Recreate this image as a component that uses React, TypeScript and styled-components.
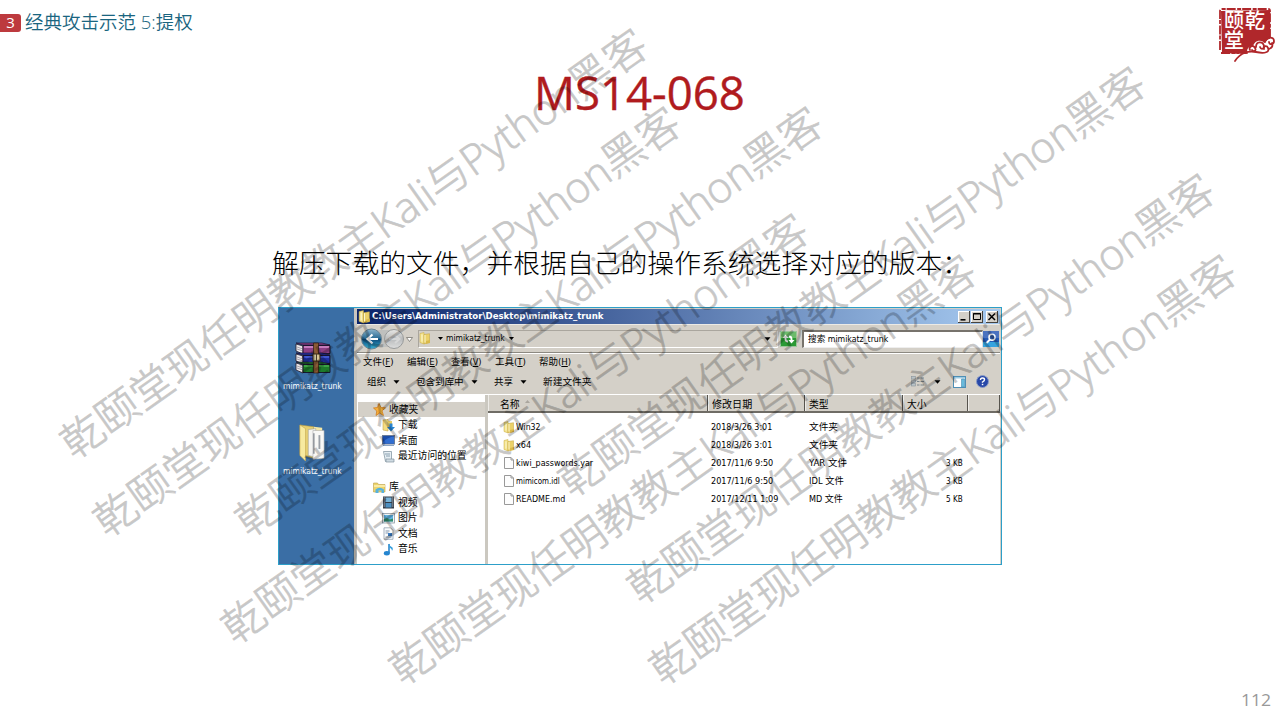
import React, { useLayoutEffect, useRef, useState } from "react";
import styled, { createGlobalStyle } from "styled-components";

const Global = createGlobalStyle`
  * { box-sizing: border-box; }
  body { margin: 0; background: #fff; overflow: hidden; }
`;

const uiFont = `"DejaVu Sans Condensed", "DejaVu Sans", "Noto Sans CJK SC", sans-serif`;

/* ---------- text that is fitted to a column width ---------- */
const FitBox = styled.span<{ $w: number }>`
  display: inline-block;
  width: ${(p) => p.$w}px;
  white-space: nowrap;
  flex: none;
`;
const FitInner = styled.span`
  display: inline-block;
  transform-origin: 0 50%;
`;
function Fit({ w, children }: { w: number; children: React.ReactNode }) {
  const ref = useRef<HTMLSpanElement>(null);
  const [scale, setScale] = useState(1);
  useLayoutEffect(() => {
    const measure = () => {
      if (ref.current) setScale(w / ref.current.offsetWidth);
    };
    measure();
    document.fonts?.ready.then(measure);
  }, [w]);
  return (
    <FitBox $w={w}>
      <FitInner ref={ref} style={{ transform: `scaleX(${scale})` }}>{children}</FitInner>
    </FitBox>
  );
}

/* ---------- slide ---------- */
const Slide = styled.main`
  position: relative;
  width: 1280px;
  height: 720px;
  overflow: hidden;
  background: #fff;
  display: flex;
  flex-direction: column;
`;
const Header = styled.header`
  display: flex;
  justify-content: space-between;
  height: 64px;
  padding-right: 4px;
`;
const Section = styled.div`
  display: flex;
  align-items: center;
  gap: 4px;
  height: 44px;
  font: 350 18.5px/24px "Open Sans", "Noto Sans CJK SC", sans-serif;
  color: #1a6580;
`;
const Badge = styled.span`
  width: 21px;
  height: 18px;
  margin-top: 1px;
  border-radius: 0 3px 3px 0;
  background: #bd3a3e;
  color: #fff;
  font: 400 15px/17px "Open Sans", sans-serif;
  text-align: center;
`;
const Title = styled.h1`
  margin: -2px 0 0 534px;
  height: 62px;
  font: 400 46px/60px "Open Sans", sans-serif;
  color: #b01b1e;
  -webkit-text-stroke: 0.4px #b01b1e;
`;
const Lead = styled.p`
  margin: 120px 0 0 272px;
  height: 38px;
  font: 300 26.67px/36px "Noto Sans CJK SC", sans-serif;
  color: #000;
`;
const PageNo = styled.footer`
  margin: auto 9px 8px auto;
  font: 400 17px/24px "Open Sans", sans-serif;
  color: #999;
`;

/* ---------- desktop and window ---------- */
const Shot = styled.section`
  display: flex;
  width: 724px;
  height: 258px;
  margin: 25px 0 0 278px;
  border: 1px solid #2d9fc9;
  background: #d4d0c8;
  font: 400 9px/12px ${uiFont};
  color: #000;
`;
const Desktop = styled.div`
  width: 75px;
  padding: 34px 0 0 4px;
  background: #3a6ea5;
  display: flex;
  flex-direction: column;
  gap: 29px;
`;
const Shortcut = styled.div`
  display: flex;
  flex-direction: column;
  gap: 3px;
  height: 53px;
  color: #fff;
  svg { margin-left: 12px; }
`;
const Win = styled.div`
  flex: 1;
  display: flex;
  flex-direction: column;
  border: solid #d4d0c8;
  border-width: 1px 1px 0 3px;
  border-left-color: #c9c6bf;
  min-width: 0;
`;
const TitleBar = styled.div`
  display: flex;
  align-items: center;
  height: 15px;
  padding: 0 2px 0 1px;
  background: linear-gradient(90deg, #0a246a, #a6caf0);
  color: #fff;
  font-weight: 700;
  line-height: 11px;
  svg { margin-right: 1px; }
`;
const WinButtons = styled.div`
  display: flex;
  gap: 1px;
  margin-left: auto;
  svg { margin: 0; }
  svg:last-child { margin-left: 2px; }
`;
const AddressRow = styled.div`
  display: flex;
  align-items: center;
  height: 29px;
  padding-left: 4px;
  border-top: 1px solid #eceae5;
  border-bottom: 1px solid #8c8981;
`;
const PathBox = styled.div`
  display: flex;
  align-items: center;
  width: 360px;
  height: 18px;
  margin-left: 1px;
  margin-right: 2px;
  border: 1px solid #aaa69e;
  border-bottom-color: #fff;
  border-right-color: #eee;
  line-height: 11px;
  svg:last-child { margin-left: auto; margin-right: 6px; }
`;
const SearchBox = styled.div`
  display: flex;
  align-items: center;
  width: 181px;
  height: 18px;
  margin-left: 5px;
  padding-left: 4px;
  border: 1px solid #77736c;
  border-width: 2px 1px 1px 2px;
  border-right-color: #ddd;
  border-bottom-color: #eee;
  background: #fff;
`;
const MenuRow = styled.div`
  display: flex;
  align-items: center;
  height: 18px;
  padding: 0 0 2px 6px;
  gap: 13px;
  border-top: 1px solid #fff;
  font-size: 9.5px;
`;
const CommandRow = styled.div`
  display: flex;
  align-items: center;
  height: 23px;
  padding: 0 11px 2px 10px;
  font-size: 9.5px;
`;
const Gap = styled.i<{ $w: number }>`
  width: ${(p) => p.$w}px;
  flex: none;
`;
const Spacer = styled.i`
  flex: 1;
`;
const Body = styled.div`
  flex: 1;
  display: flex;
  background: #fff;
  border-top: 1px solid #fff;
`;
const Nav = styled.nav`
  width: 131px;
  padding-top: 6.5px;
  border-right: 3px solid #cbc8c0;
  font-size: 9.8px;
`;
const NavRow = styled.div<{ $child?: boolean; $on?: boolean }>`
  display: flex;
  align-items: center;
  gap: 3px;
  height: 15.5px;
  margin-left: 1px;
  padding-left: ${(p) => (p.$child ? 24 : 15)}px;
  padding-top: 1px;
  background: ${(p) => (p.$on ? "#d4d0c8" : "transparent")};
`;
const List = styled.div`
  flex: 1;
`;
const HeadRow = styled.div`
  display: flex;
  height: 18px;
  margin-bottom: 5px;
  background: #d4d0c8;
  border-bottom: 2px solid #6f6c65;
  font-size: 9.8px;
  line-height: 19px;
`;
const HeadCell = styled.div<{ $w: number; $pad?: number }>`
  display: flex;
  width: ${(p) => p.$w}px;
  padding-left: ${(p) => p.$pad ?? 3}px;
  border-right: 1px solid #57544e;
  box-shadow: inset 1px 0 #eeece8;
`;
const FileRow = styled.div`
  display: grid;
  grid-template-columns: 13px 195px 98px 97px 57px;
  align-items: center;
  height: 18px;
  margin-left: 15px;
`;
const Size = styled.div`
  display: flex;
  justify-content: flex-end;
`;

/* ---------- watermarks ---------- */
const Mark = styled.div<{ $x: number; $y: number }>`
  position: absolute;
  left: ${(p) => p.$x}px;
  top: ${(p) => p.$y}px;
  height: 56px;
  margin: -28px 0 0 -21px;
  transform: rotate(-35.3deg);
  transform-origin: 21px 28px;
  font: 300 42px/56px "Open Sans", "Noto Sans CJK SC", sans-serif;
  color: #000;
  -webkit-text-stroke: 0.8px #000;
  opacity: 0.215;
  white-space: nowrap;
  pointer-events: none;
`;

/* ---------- logo ---------- */
const Seal = styled.div`
  position: relative;
  width: 58px;
  height: 58px;
  margin-top: 6px;
`;
const SealArt = styled.svg`
  position: absolute;
  inset: 0;
`;
const SealText = styled.div`
  position: relative;
  display: grid;
  grid-template-columns: 21px 22px;
  grid-auto-rows: 20px;
  padding: 4px 0 0 6px;
  font: 500 20px/20px "Noto Sans CJK SC", sans-serif;
  color: #fff;
`;

function SealLogo() {
  return (
    <Seal>
      <SealArt width="58" height="58" viewBox="1218 6 58 58">
        <path d="M1221 11 L1270 10 L1270 39 L1264 43 L1262 53 L1245 54 L1222 53 Z" fill="#b0272b" />
        <path d="M1220 50V11q0-2 2-2h46q2 0 2 2v30M1221 53h18" fill="none" stroke="#b0272b" strokeWidth="1.800" strokeDasharray="9 1.500 4 1" />
        <path d="M1248 54c-3-5 2-9 5-7 1-8 11-8 12-2 0-6 8-9 11-4v16h-20z" fill="#fff" />
        <g fill="none" stroke="#b0272b" strokeWidth="1.800" strokeLinecap="round">
          <path d="M1235 61c6-9 13-10 21-9 9 2 14 0 12-4-1-3-6-2-4 1" />
          <path d="M1250 50c-2-3 3-6 5-2 2 3-2 4-3 2M1256 47c0-6 7-6 8-1 1 3-3 4-4 1M1265 42c1-5 9-6 9-1 0 4-5 4-5 1M1269 49c3-1 4-3 3-6" />
        </g>
      </SealArt>
      <SealText><span>颐</span><span>乾</span><span>堂</span></SealText>
    </Seal>
  );
}

/* ---------- icons ---------- */
function Winrar() {
  return (
    <svg width="36" height="32" viewBox="0 0 36 32">
      {[["#8d3f86", "#d18cc8", 1], ["#2233a8", "#4a61d8", 11], ["#1d7a2a", "#45ad4c", 20]].map(([c, l, y], i) => (
        <g key={i} transform={`translate(0 ${y})`}>
          <path d="M1 1l7 2v8l-7-3z" fill="#ece8ea" stroke="#221c2c" strokeWidth=".8" />
          <path d="M2 4l6 2M2 6l6 2" stroke="#8b8790" strokeWidth=".7" />
          <path d="M1 0h26l8 2H8z" fill={c as string} stroke="#1d1430" strokeWidth=".7" />
          <path d="M8 2.500h27v8H8z" fill={c as string} stroke="#141026" strokeWidth=".9" />
          <path d="M9 4h25" stroke={l as string} strokeWidth="1.600" />
        </g>
      ))}
      <path d="M18.500 1h5v30h-5z" fill="#8a5a35" stroke="#2e1b10" strokeWidth=".7" />
      <path d="M18 12h7v7h-7z" fill="#d8c89a" stroke="#3a2a18" />
      <path d="M21.500 12v8" stroke="#4a3a28" />
    </svg>
  );
}
function BigFolder() {
  return (
    <svg width="34" height="41" viewBox="0 0 34 41">
      <path d="M4 1l15 2v34L4 33z" fill="#e6cf72" stroke="#b99a3d" strokeWidth=".6" />
      <path d="M19 3l9 1v33l-9 1z" fill="#f4e7a4" />
      <path d="M13 6l8-1 1 31-9-2z" fill="#f4f4f2" stroke="#9c9c94" strokeWidth=".6" />
      <path d="M18 7h12v30l-12 1z" fill="#f8f8f6" stroke="#a9a9a9" strokeWidth=".6" />
      <path d="M19 10v22" stroke="#80868e" strokeWidth="1.400" /><path d="M25 12v15" stroke="#9aa0a8" strokeWidth="2" />
      <path d="M4 1l6 4v35l-6-6z" fill="#f7eaa0" stroke="#c2a64c" strokeWidth=".6" />
    </svg>
  );
}
function Folder({ s = 12 }: { s?: number }) {
  return (
    <svg width={s} height={s + 1} viewBox="0 0 12 13">
      <path d="M1 1.500L5 .5V12L1 10.500z" fill="#f4e38d" stroke="#c9a83c" strokeWidth=".5" />
      <path d="M5 2.500l5.500-.8V10L5 12z" fill="#ebd169" stroke="#c3a33c" strokeWidth=".5" />
      <path d="M6 3v7.500M3 2.500v7" stroke="#fbf5cc" />
      <path d="M7 9l4-1v3l-4 1z" fill="#d9b94c" />
    </svg>
  );
}
function Page() {
  return (
    <svg width="12" height="14" viewBox="0 0 12 14">
      <path d="M1.500 1.500h6.500l2.500 2.500v8.500h-9z" fill="#fdfdfd" stroke="#999" />
      <path d="M8 1.500V4h2.500" fill="none" stroke="#999" />
    </svg>
  );
}
const Down = ({ c = "#000" }: { c?: string }) => (
  <svg width="7" height="4" viewBox="0 0 7 4"><path d="M.5 .3h6L3.500 3.700z" fill={c} /></svg>
);
const DownSmall = () => (
  <svg width="5" height="3" viewBox="0 0 5 3"><path d="M0 0h5L2.500 3z" /></svg>
);
function NavButtons() {
  return (
    <svg width="56" height="24" viewBox="0 0 56 24">
      <defs>
        <linearGradient id="bk" x2="0" y2="1"><stop stopColor="#8db5cc" /><stop offset=".48" stopColor="#286a94" /><stop offset=".52" stopColor="#0d4c7c" /><stop offset="1" stopColor="#36b1d6" /></linearGradient>
        <linearGradient id="fw" x2="0" y2="1"><stop stopColor="#e8e8e6" /><stop offset=".5" stopColor="#b9bbbc" /><stop offset="1" stopColor="#dddede" /></linearGradient>
      </defs>
      <rect x="4" y="3" width="38" height="17" rx="8" fill="#bfc0be" />
      <circle cx="10.500" cy="12" r="10" fill="url(#bk)" stroke="#6a8493" />
      <path d="M17 12H7m4.500-4.500L6.500 12l5 4.500" fill="none" stroke="#fff" strokeWidth="2.200" />
      <circle cx="33" cy="12" r="9.500" fill="url(#fw)" stroke="#999b9b" />
      <path d="M28 12h10m-4-4l4.500 4-4.500 4" fill="none" stroke="#d6d7d7" strokeWidth="2" />
      <path d="M45.500 10.500h6l-3 4z" fill="#fff" stroke="#77756f" strokeWidth=".8" />
    </svg>
  );
}
function Refresh() {
  return (
    <svg width="17" height="16" viewBox="0 0 17 16">
      <rect x=".5" y=".5" width="16" height="15" fill="#2b9a35" stroke="#9cc69c" />
      <path d="M1 1h15v6H1z" fill="#6dbb6c" />
      <path d="M2.500 7h6L5.500 3.500zM8.500 9h6l-3 3.500z" fill="#fff" />
      <path d="M5.500 6v2q0 2.500 2.500 2.500M11.500 10V8q0-2.500-2.500-2.500" fill="none" stroke="#fff" strokeWidth="1.800" />
    </svg>
  );
}
function SearchBtn() {
  return (
    <svg width="16" height="16" viewBox="0 0 16 16">
      <rect width="16" height="16" fill="#2459b4" />
      <path d="M0 0h16v7H0z" fill="#4a72c0" /><path d="M0 11h16v5H0z" fill="#36a3df" />
      <circle cx="9" cy="6.300" r="3" fill="#2c55a0" stroke="#fff" strokeWidth="1.500" />
      <path d="M7 8.500L3.500 12" stroke="#fff" strokeWidth="2" />
    </svg>
  );
}
function WinButton({ kind }: { kind: "min" | "max" | "close" }) {
  return (
    <svg width="12" height="12" viewBox="0 0 12 12">
      <rect width="12" height="12" fill="#47443f" />
      <rect width="11" height="11" fill="#fff" />
      <rect x="1" y="1" width="10" height="10" fill="#d4d0c8" />
      {kind === "min" && <path d="M2.500 8.800h5" stroke="#000" strokeWidth="1.600" />}
      {kind === "max" && <path d="M2.500 2.500h7v6h-7zM2 3h8" fill="none" stroke="#000" />}
      {kind === "close" && <path d="M2.500 2.500l6.500 6.500M9 2.500L2.500 9" stroke="#000" strokeWidth="1.500" />}
    </svg>
  );
}
type Kind = "star" | "down" | "desk" | "recent" | "lib" | "video" | "pic" | "doc" | "music";
function NavIcon({ kind }: { kind: Kind }) {
  return (
    <svg width="13" height="13" viewBox="0 0 13 13">
      {kind === "star" && <path d="M6 .5l2 4 4.500.3-3.500 3 1.500 4.700L6.500 10 3 12.500l.8-4.500L.5 5l4-.5z" fill="#f6b23c" stroke="#cf7c20" strokeWidth=".8" />}
      {kind === "down" && <><path d="M1 1l5-.5V12l-5-1z" fill="#f2dd83" stroke="#c9a545" strokeWidth=".6" /><path d="M6 2h4v7H6z" fill="#e4c763" /><path d="M7.500 4.500h3V8H13l-4 4.500L5 8h2.500z" fill="#2b86cf" /></>}
      {kind === "desk" && <><rect x=".5" y="1.500" width="12" height="8.500" fill="#1c4da8" stroke="#6b7c98" /><path d="M1 8q5-5 11-5.500V9.500H1z" fill="#316ed0" /><path d="M1 11.500h11" stroke="#8ea6c4" /></>}
      {kind === "recent" && <><path d="M1.500 1.500h8v10h-6z" fill="#e6eef3" stroke="#8799a5" strokeWidth=".8" /><path d="M3 4h5M4 6h4" stroke="#8aa0b0" /><path d="M4 9h8v3H4z" fill="#cfdbe2" stroke="#83939d" strokeWidth=".7" /></>}
      {kind === "lib" && <><path d="M.5 2h4l1 1.500h6.500V11H.5z" fill="#ecd46c" stroke="#bda04a" strokeWidth=".6" /><path d="M1 5h11" stroke="#fff3b6" strokeWidth="1.500" /><path d="M2.500 12V8.500q4-3.500 8.500 0V12H8.500V9.500h-3V12z" fill="#57b2dc" /></>}
      {kind === "video" && <><rect x="1" y=".5" width="11" height="12" fill="#343c48" /><rect x="3.500" y="1.500" width="6" height="4.500" fill="#78b2d6" /><rect x="3.500" y="7" width="6" height="4.500" fill="#4d8fc0" /><path d="M2.200 1.500v10M10.800 1.500v10" stroke="#dfe4e8" strokeWidth="1" strokeDasharray="1 1" /></>}
      {kind === "pic" && <><rect x=".5" y="1.500" width="12" height="9.500" fill="#f0f4f6" stroke="#8d9aa3" strokeWidth=".8" /><rect x="2" y="3" width="9" height="6.500" fill="#62b4e0" /><path d="M2 9.500V7l3-1 3 1.500 3-1v3z" fill="#328b6b" /></>}
      {kind === "doc" && <><path d="M2 .8h6.500l2.500 2.500v9H2z" fill="#fafcfd" stroke="#8fa0ae" strokeWidth=".8" /><path d="M3.500 4h4M3.500 6h3M3.500 10h6" stroke="#8195ab" /><rect x="6" y="6" width="4" height="3" fill="#3a7cc5" /></>}
      {kind === "music" && <><path d="M7 1v9" stroke="#1d7cc6" strokeWidth="1.500" /><path d="M7 .5q.5 2.500 3.500 4 1 1.500-.5 3.500Q10 5.500 7 4.500z" fill="#38a0de" /><ellipse cx="4.800" cy="10.300" rx="3" ry="2.200" fill="#2485d0" /></>}
    </svg>
  );
}
const ViewIcon = () => (
  <svg width="13" height="11" viewBox="0 0 13 11">
    <g fill="#b9c2c6" stroke="#87939a" strokeWidth=".6"><rect x=".5" y=".5" width="4" height="2.500" /><rect x=".5" y="4" width="4" height="2.500" /><rect x=".5" y="7.500" width="4" height="2.500" /></g>
    <path d="M6 2h2.500m1 0H13M6 5.500h2.500m1 0H13M6 9h2.500m1 0H13" stroke="#7b868c" />
  </svg>
);
const PaneIcon = () => (
  <svg width="13" height="12" viewBox="0 0 13 12">
    <rect x=".5" y=".5" width="12" height="11" fill="#fff" stroke="#4f8fb5" /><path d="M1 1h11v1.500H1z" fill="#9ccbe2" /><path d="M8.500 3h3v8h-3z" fill="#68bbdc" stroke="#458bb2" strokeWidth=".6" />
  </svg>
);
const HelpIcon = () => (
  <svg width="13" height="13" viewBox="0 0 13 13">
    <circle cx="6.500" cy="6.500" r="6" fill="#2848a8" stroke="#8b9cc7" /><path d="M4.500 5q0-2 2-2t2 1.700q0 1-2 2.300v.8" fill="none" stroke="#fff" strokeWidth="1.400" /><rect x="5.800" y="8.800" width="1.500" height="1.400" fill="#fff" />
  </svg>
);

/* ---------- data ---------- */
const favourites: [Kind, string, number][] = [["down", "下载", 20], ["desk", "桌面", 20], ["recent", "最近访问的位置", 69]];
const libraries: [Kind, string, number][] = [["video", "视频", 20], ["pic", "图片", 20], ["doc", "文档", 20], ["music", "音乐", 20]];
const menus: [string, string, number][] = [["文件", "F", 31], ["编辑", "E", 31], ["查看", "V", 31], ["工具", "T", 31], ["帮助", "H", 32]];
const files: [boolean, string, number, string, number, string, number, string][] = [
  [true, "Win32", 25, "2018/3/26 3:01", 61, "文件夹", 29, ""],
  [true, "x64", 15, "2018/3/26 3:01", 61, "文件夹", 29, ""],
  [false, "kiwi_passwords.yar", 77, "2017/11/6 9:50", 62, "YAR 文件", 38, "3 KB"],
  [false, "mimicom.idl", 44, "2017/11/6 9:50", 62, "IDL 文件", 35, "3 KB"],
  [false, "README.md", 49, "2017/12/11 1:09", 67, "MD 文件", 34, "5 KB"],
];
const marks: [number, number][] = [
  [82, 435], [114.5, 513], [257, 513], [243, 620], [411, 661], [580, 472.5], [649, 580], [671, 661],
];

export default function App() {
  return (
    <Slide>
      <Global />
      <Header>
        <Section>
          <Badge>3</Badge>
          <Fit w={168}>经典攻击示范 5:提权</Fit>
        </Section>
        <SealLogo />
      </Header>
      <Title><Fit w={211}>MS14-068</Fit></Title>
      <Lead><Fit w={697}>解压下载的文件，并根据自己的操作系统选择对应的版本：</Fit></Lead>

      <Shot>
        <Desktop>
          <Shortcut><Winrar /><Gap $w={1} /><Fit w={59}>mimikatz_trunk</Fit></Shortcut>
          <Shortcut><BigFolder /><Fit w={59}>mimikatz_trunk</Fit></Shortcut>
        </Desktop>
        <Win>
          <TitleBar>
            <Folder s={13} />
            <Fit w={231}>C:\Users\Administrator\Desktop\mimikatz_trunk</Fit>
            <WinButtons><WinButton kind="min" /><WinButton kind="max" /><WinButton kind="close" /></WinButtons>
          </TitleBar>
          <AddressRow>
            <NavButtons />
            <PathBox>
              <Folder s={12} /><Gap $w={7} /><DownSmall /><Gap $w={3} />
              <Fit w={59}>mimikatz_trunk</Fit>
              <Gap $w={4} /><DownSmall /><Down />
            </PathBox>
            <Refresh />
            <SearchBox><Fit w={80}>搜索 mimikatz_trunk</Fit></SearchBox>
            <SearchBtn />
          </AddressRow>
          <MenuRow>
            {menus.map(([t, k, w]) => <Fit key={k} w={w}>{t}(<u>{k}</u>)</Fit>)}
          </MenuRow>
          <CommandRow>
            <Fit w={19}>组织</Fit><Gap $w={7} /><Down /><Gap $w={16} />
            <Fit w={48}>包含到库中</Fit><Gap $w={7} /><Down /><Gap $w={16} />
            <Fit w={19}>共享</Fit><Gap $w={7} /><Down /><Gap $w={16} />
            <Fit w={49}>新建文件夹</Fit>
            <Spacer />
            <ViewIcon /><Gap $w={10} /><Down /><Gap $w={12} /><PaneIcon /><Gap $w={10} /><HelpIcon />
          </CommandRow>
          <Body>
            <Nav>
              <NavRow $on><NavIcon kind="star" /><Fit w={29}>收藏夹</Fit></NavRow>
              {favourites.map(([k, t, w]) => <NavRow key={t} $child><NavIcon kind={k} /><Fit w={w}>{t}</Fit></NavRow>)}
              <NavRow />
              <NavRow><NavIcon kind="lib" /><Fit w={10}>库</Fit></NavRow>
              {libraries.map(([k, t, w]) => <NavRow key={t} $child><NavIcon kind={k} /><Fit w={w}>{t}</Fit></NavRow>)}
            </Nav>
            <List>
              <HeadRow>
                <HeadCell $w={220} $pad={12}><Fit w={20}>名称</Fit><Gap $w={5} /><svg width="5" height="14" viewBox="0 0 5 14"><path d="M0 8h5L2.500 5z" fill="#aaa69e" /></svg></HeadCell>
                <HeadCell $w={97} $pad={4}><Fit w={40}>修改日期</Fit></HeadCell>
                <HeadCell $w={98} $pad={4}><Fit w={20}>类型</Fit></HeadCell>
                <HeadCell $w={65} $pad={4}><Fit w={20}>大小</Fit></HeadCell>
                <HeadCell $w={32} />
              </HeadRow>
              {files.map(([dir, n, nw, d, dw, t, tw, s]) => (
                <FileRow key={n}>
                  {dir ? <Folder /> : <Page />}
                  <Fit w={nw}>{n}</Fit>
                  <Fit w={dw}>{d}</Fit>
                  <Fit w={tw}>{t}</Fit>
                  <Size>{s && <Fit w={17}>{s}</Fit>}</Size>
                </FileRow>
              ))}
            </List>
          </Body>
        </Win>
      </Shot>
      <PageNo><Fit w={30}>112</Fit></PageNo>
      {marks.map(([x, y]) => (
        <Mark key={`${x}-${y}`} $x={x} $y={y}><Fit w={707}>乾颐堂现任明教教主Kali与Python黑客</Fit></Mark>
      ))}
    </Slide>
  );
}
